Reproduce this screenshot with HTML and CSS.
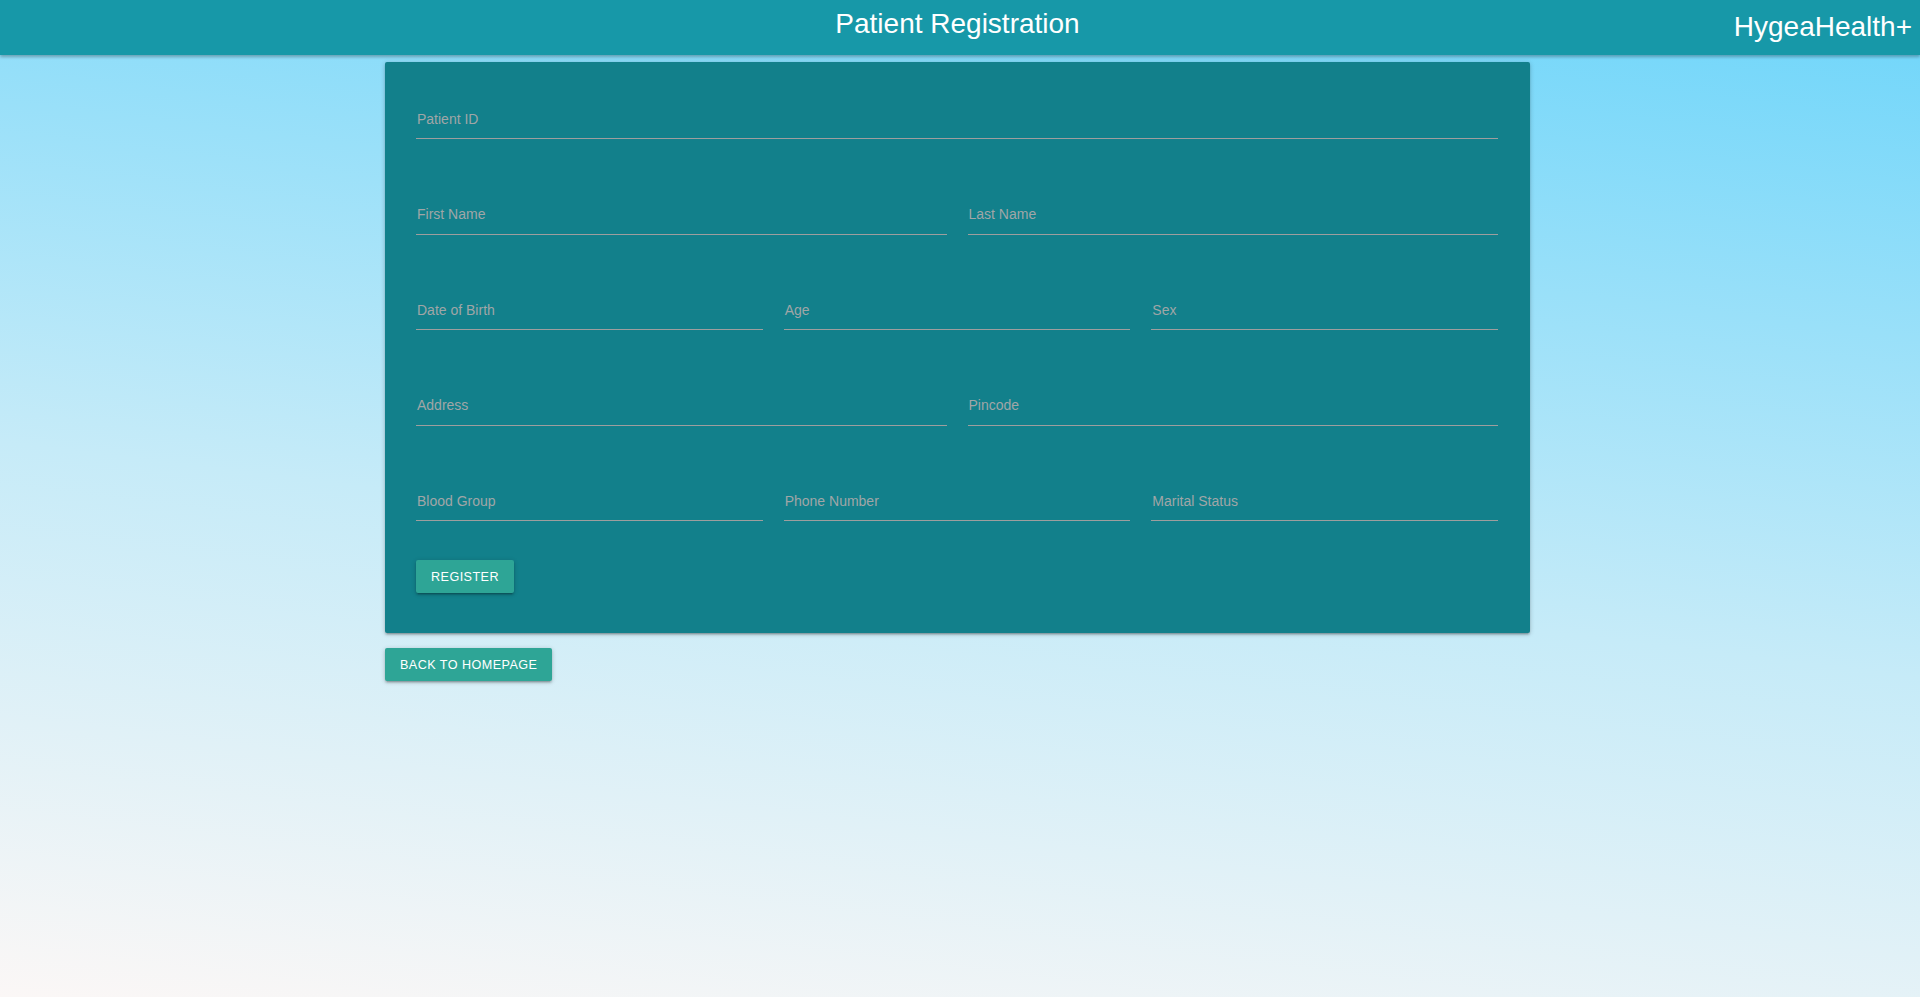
FILE: index.html
```html
<!DOCTYPE html>
<html lang="en">
<head>
<meta charset="utf-8">
<title>Patient Registration</title>
<link rel="stylesheet" href="styles.css">
</head>
<body>
<header class="topbar">
  <div class="topbar-side"></div>
  <h1 class="topbar-title">Patient Registration</h1>
  <div class="topbar-brand">HygeaHealth+</div>
</header>
<main class="main">
  <form class="card">
    <div class="row row-1">
      <label class="field"><span class="field-label">Patient ID</span></label>
    </div>
    <div class="row row-2">
      <label class="field"><span class="field-label">First Name</span></label>
      <label class="field"><span class="field-label">Last Name</span></label>
    </div>
    <div class="row row-3">
      <label class="field"><span class="field-label">Date of Birth</span></label>
      <label class="field"><span class="field-label">Age</span></label>
      <label class="field"><span class="field-label">Sex</span></label>
    </div>
    <div class="row row-2">
      <label class="field"><span class="field-label">Address</span></label>
      <label class="field"><span class="field-label">Pincode</span></label>
    </div>
    <div class="row row-3">
      <label class="field"><span class="field-label">Blood Group</span></label>
      <label class="field"><span class="field-label">Phone Number</span></label>
      <label class="field"><span class="field-label">Marital Status</span></label>
    </div>
    <div class="actions">
      <button type="button" class="btn">Register</button>
    </div>
  </form>
  <div class="back">
    <button type="button" class="btn">Back to Homepage</button>
  </div>
</main>
</body>
</html>
```

FILE: styles.css
```css
html {
  min-height: 100%;
}

body {
  margin: 0;
  min-height: 100vh;
  font-family: "Liberation Sans", Arial, sans-serif;
  background: linear-gradient(187deg, #6dd5fa 0%, #c6ebf8 55%, #fbf7f6 100%);
  background-attachment: fixed;
}

.topbar {
  height: 55px;
  background: #1798a8;
  box-shadow: 0 2px 3px rgba(0, 0, 0, 0.28);
  display: grid;
  grid-template-columns: 1fr auto 1fr;
  padding-right: 5px;
  color: #ffffff;
  position: relative;
  z-index: 1;
}

.topbar-title {
  margin: 0;
  padding-top: 8px;
  font-size: 28px;
  font-weight: 400;
  line-height: 32px;
}

.topbar-brand {
  justify-self: end;
  margin-right: 3px;
  padding-top: 11px;
  font-size: 28px;
  line-height: 32px;
}

.main {
  padding-right: 5px;
  display: flex;
  flex-direction: column;
  align-items: center;
}

.card {
  width: 1145px;
  box-sizing: border-box;
  margin-top: 7px;
  padding: 28px 32px 40px 31px;
  background: #12808b;
  border-radius: 2px;
  box-shadow: 0 2px 2px 0 rgba(0, 0, 0, 0.14), 0 3px 1px -2px rgba(0, 0, 0, 0.12), 0 1px 5px 0 rgba(0, 0, 0, 0.2);
  display: flex;
  flex-direction: column;
  gap: 46.5px;
}

.row {
  display: grid;
  column-gap: 21px;
}

.row-1 {
  grid-template-columns: 1fr;
}

.row-2 {
  grid-template-columns: 1fr 1fr;
}

.row-3 {
  grid-template-columns: 1fr 1fr 1fr;
}

.field {
  box-sizing: content-box;
  height: 37.5px;
  padding-bottom: 10.5px;
  border-bottom: 1px solid #9e9e9e;
  display: flex;
  align-items: flex-end;
}

.field-label {
  font-size: 14px;
  line-height: 17px;
  color: #a0a6a7;
  padding-left: 1px;
}

.actions {
  margin-top: -7.5px;
}

.btn {
  height: 33px;
  padding: 0 15px;
  border: none;
  border-radius: 2px;
  background: #2ea596;
  color: #ffffff;
  font-family: "Liberation Sans", Arial, sans-serif;
  font-size: 12.6px;
  letter-spacing: 0.45px;
  text-transform: uppercase;
  box-shadow: 0 2px 2px 0 rgba(0, 0, 0, 0.14), 0 3px 1px -2px rgba(0, 0, 0, 0.12), 0 1px 5px 0 rgba(0, 0, 0, 0.2);
  cursor: pointer;
}

.back {
  width: 1145px;
  margin-top: 15px;
}
```
